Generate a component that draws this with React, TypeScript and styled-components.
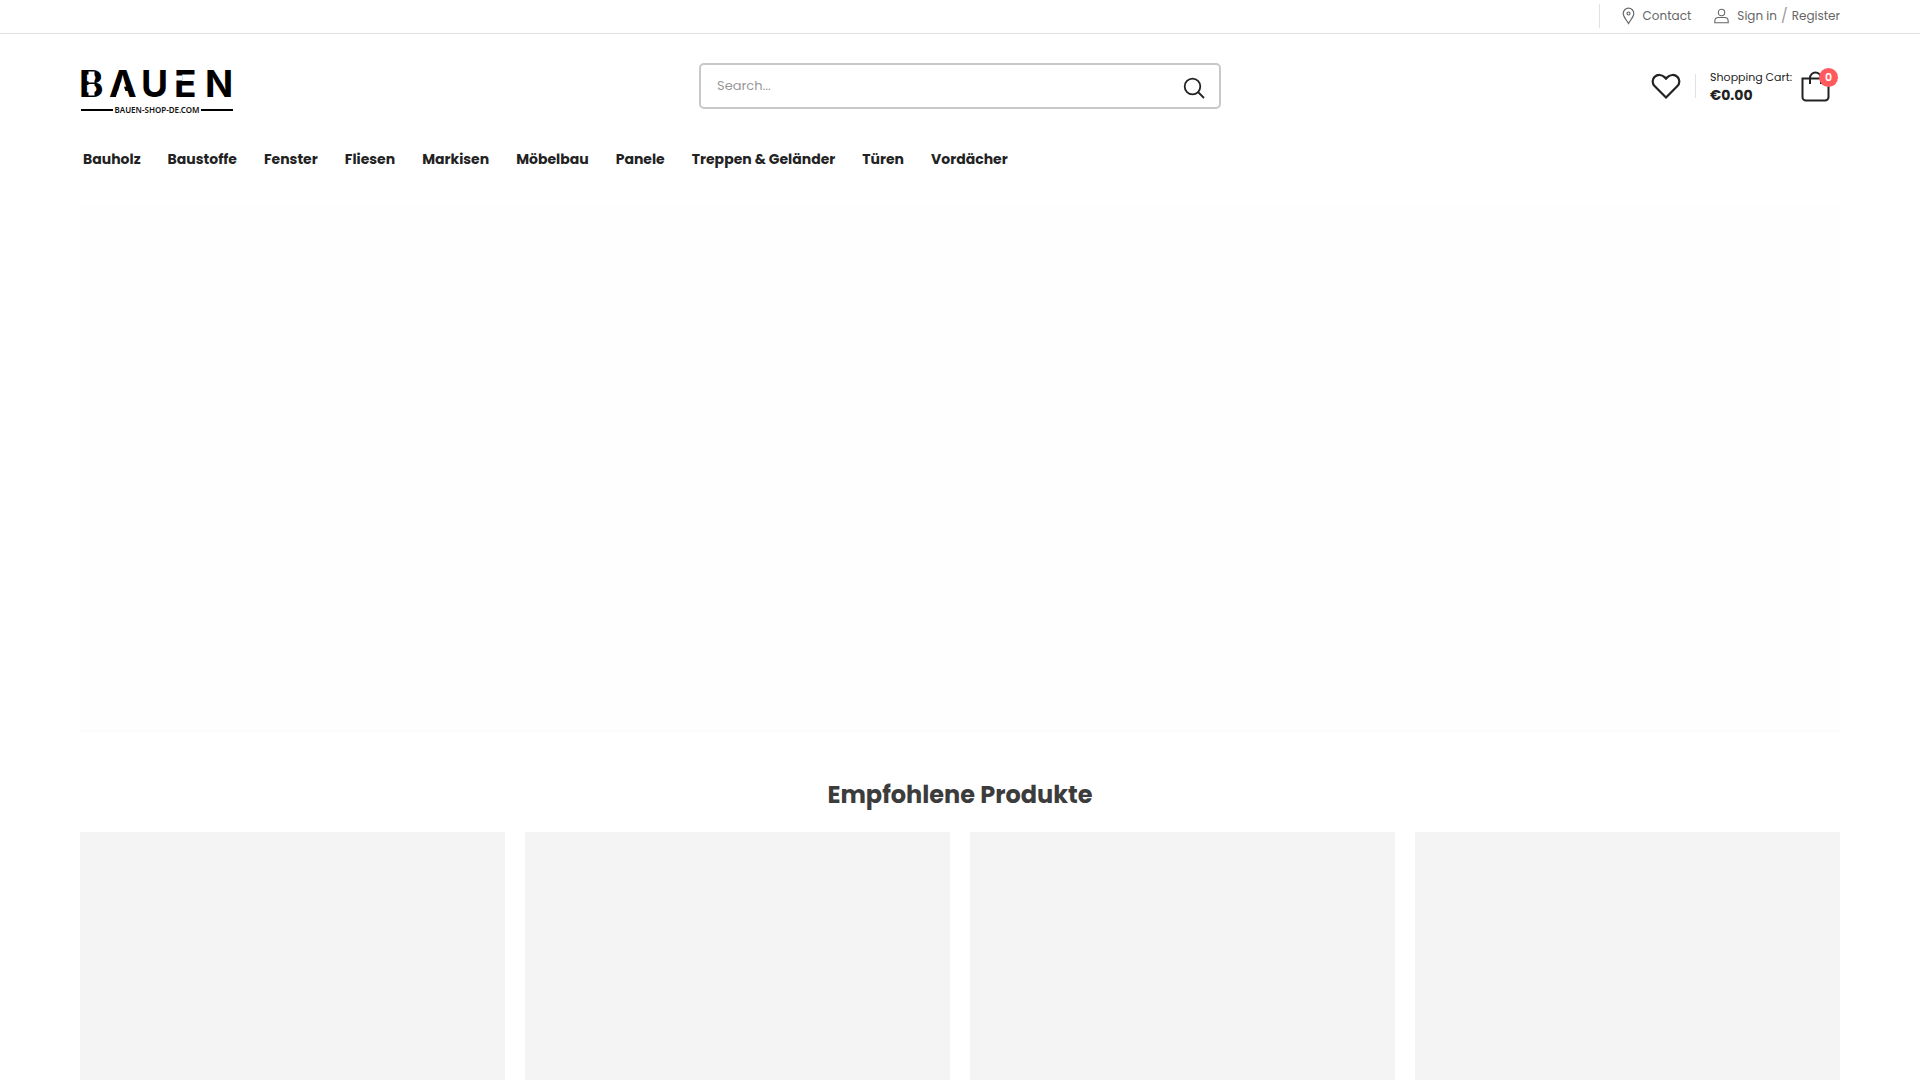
import React from "react";
import styled, { createGlobalStyle } from "styled-components";

const GlobalStyle = createGlobalStyle`
  *, *::before, *::after { box-sizing: border-box; }
  body {
    margin: 0;
    background: #fff;
    color: #222;
    font-family: Poppins, Inter, "Liberation Sans", sans-serif;
    font-size: 14px;
  }
  a { color: inherit; text-decoration: none; }
`;

const Page = styled.div`
  height: 100vh;
  overflow: hidden;
`;

const Container = styled.div`
  padding: 0 80px;
`;

const TopBar = styled.div`
  border-bottom: 1px solid #e1e1e1;
  color: #666;
  font-size: 12px;
  line-height: 16px;
`;

const TopBarInner = styled(Container)`
  display: flex;
  justify-content: flex-end;
  align-items: center;
  height: 33px;
  padding-bottom: 2px;
`;

const Divider = styled.span<{ $gap: number }>`
  width: 1px;
  height: 24px;
  margin-right: ${(p) => p.$gap}px;
  background: #e1e1e1;
`;

const TopLink = styled.a`
  display: flex;
  align-items: center;
  gap: 8px;
`;

const Account = styled.div`
  display: flex;
  align-items: center;
  gap: 4px;
  margin-left: 23px;
`;

const Slash = styled.span`
  color: #999;
  font-size: 14px;
`;

const MainRow = styled(Container)`
  display: grid;
  grid-template-columns: 1fr minmax(0, 522px) 1fr;
  align-items: center;
  padding-top: 24px;
`;

const LogoLink = styled.a`
  display: block;
  width: 160px;
  height: 56px;
`;

const SearchForm = styled.form`
  display: flex;
  height: 46px;
  border: 2px solid #c8c8c8;
  border-radius: 5px;
`;

const SearchInput = styled.input`
  flex: 1;
  min-width: 0;
  padding: 0 16px;
  border: 0;
  outline: 0;
  background: none;
  color: #666;
  font: inherit;
  font-size: 13px;
  &::placeholder { color: #999; opacity: 1; }
`;

const SearchButton = styled.button`
  display: flex;
  align-items: center;
  justify-content: center;
  width: 50px;
  padding: 4px 0 0;
  border: 0;
  background: none;
  color: #222;
`;

const Actions = styled.div`
  display: flex;
  justify-content: flex-end;
  align-items: center;
`;

const Wishlist = styled.a`
  display: flex;
  margin-right: 14px;
`;

const Cart = styled.a`
  display: flex;
  align-items: center;
  gap: 9px;
  padding-right: 10px;
`;

const CartText = styled.span`
  display: flex;
  flex-direction: column;
  font-size: 11px;
  line-height: 18px;
`;

const CartTotal = styled.strong`
  font-size: 14px;
  font-weight: 700;
`;

const BagBox = styled.span`
  position: relative;
  display: flex;
`;

const Badge = styled.span`
  position: absolute;
  top: -3px;
  right: -8px;
  width: 19px;
  height: 19px;
  border-radius: 50%;
  background: #ff5b5e;
  color: #fff;
  font-size: 11px;
  font-weight: 600;
  line-height: 19px;
  text-align: center;
`;

const Nav = styled.nav`
  padding: 35px 83px 0;
`;

const NavList = styled.ul`
  display: flex;
  gap: 27px;
  margin: 0;
  padding: 0;
  list-style: none;
  font-weight: 700;
  line-height: 20px;
`;

const Hero = styled.section`
  height: 528px;
  margin: 36px 80px 0;
  border-bottom: 3px solid #fcfcfc;
  background: #fefefe;
`;

const Title = styled.h2`
  margin: 45px 0 20px;
  color: #3c3c3c;
  font-size: 24px;
  font-weight: 700;
  line-height: 34px;
  text-align: center;
`;

const Products = styled(Container)`
  display: grid;
  grid-template-columns: repeat(4, 1fr);
  gap: 20px;
`;

const ProductCard = styled.article`
  aspect-ratio: 1;
  background: #f4f4f4;
`;

const Logo = () => (
  <svg width="160" height="56" viewBox="0 0 160 56" overflow="visible" aria-label="Bauen Shop">
    <g fontFamily="Inter, sans-serif" fontSize="37" fontWeight="700" fill="#000">
      <text x="-1 29 61 94 125" y="39">BAUEN</text>
    </g>
    <g fill="#fff">
      <path d="M8.500 13.500h6v11h-6ZM8.500 26h6v11.500h-6Z" />
      <path d="M35.800 39.500 40.800 24.500h1.800l5 15Z" />
      <path d="M95 17.500h7v5h-7Z" />
    </g>
    <path d="M1 52h32M121 52h32" stroke="#000" strokeWidth="2" />
    <text x="77" y="55" textAnchor="middle" fontFamily="Noto Sans, sans-serif" fontSize="8" fontWeight="600" fill="#111">
      BAUEN-SHOP-DE.COM
    </text>
  </svg>
);

const PinIcon = () => (
  <svg width="13" height="18" viewBox="0 0 13 18" fill="none" stroke="currentColor" strokeWidth="1.2">
    <path d="M6.500 16.500C5 13.500 1.200 9.800 1.200 6.500a5.300 5.300 0 0 1 10.600 0c0 3.300-3.800 7-5.300 10Z" />
    <circle cx="6.500" cy="6.500" r="1.500" />
  </svg>
);

const UserIcon = () => (
  <svg width="15" height="16" viewBox="0 0 15 16" fill="none" stroke="currentColor" strokeWidth="1.100">
    <circle cx="7.500" cy="4.500" r="3.200" />
    <path d="M.8 14.800v-1.500c0-2.400 1.700-3.800 3.700-3.800h6c2 0 3.700 1.400 3.700 3.800v1.500Z" />
  </svg>
);

const SearchIcon = () => (
  <svg width="22" height="22" viewBox="0 0 22 22" fill="none" stroke="currentColor" strokeWidth="1.800">
    <circle cx="9.500" cy="9.500" r="7.800" />
    <path d="m15 15 6 6" />
  </svg>
);

const HeartIcon = () => (
  <svg width="30" height="26" viewBox="0 0 30 26" fill="none" stroke="currentColor" strokeWidth="2.200">
    <path d="M15 24.500 3.800 13.300C1 10.500 1 6.300 3.600 3.900 6.500 1.200 10.800 1.400 13.500 4.100L15 5.600l1.500-1.500c2.700-2.700 7-2.900 9.900-.2 2.600 2.400 2.600 6.600-.2 9.400Z" />
  </svg>
);

const BagIcon = () => (
  <svg width="29" height="31" viewBox="0 0 29 31" fill="none" stroke="currentColor" strokeWidth="2">
    <path d="M1.500 7.500h26v18.500a3.500 3.500 0 0 1-3.500 3.500H5A3.500 3.500 0 0 1 1.500 26Z" />
    <path d="M9 13V7a5.500 5.500 0 0 1 11 0v6" />
  </svg>
);

const categories = [
  "Bauholz", "Baustoffe", "Fenster", "Fliesen", "Markisen",
  "Möbelbau", "Panele", "Treppen & Geländer", "Türen", "Vordächer",
];

export default function App() {
  return (
    <Page>
      <GlobalStyle />
      <header>
        <TopBar>
          <TopBarInner>
            <Divider $gap={22} />
            <TopLink href="#contact"><PinIcon />Contact</TopLink>
            <Account>
              <TopLink href="#login"><UserIcon />Sign in</TopLink>
              <Slash>/</Slash>
              <a href="#register">Register</a>
            </Account>
          </TopBarInner>
        </TopBar>
        <MainRow>
          <LogoLink href="#home"><Logo /></LogoLink>
          <SearchForm role="search">
            <SearchInput type="search" aria-label="Search" placeholder="Search..." />
            <SearchButton type="button" aria-label="Submit search"><SearchIcon /></SearchButton>
          </SearchForm>
          <Actions>
            <Wishlist href="#wishlist" aria-label="Wishlist"><HeartIcon /></Wishlist>
            <Divider $gap={14} />
            <Cart href="#cart">
              <CartText>
                <span>Shopping Cart:</span>
                <CartTotal>€0.00</CartTotal>
              </CartText>
              <BagBox><BagIcon /><Badge>0</Badge></BagBox>
            </Cart>
          </Actions>
        </MainRow>
        <Nav>
          <NavList>
            {categories.map((name) => (
              <li key={name}><a href="#category">{name}</a></li>
            ))}
          </NavList>
        </Nav>
      </header>
      <main>
        <Hero />
        <Title>Empfohlene Produkte</Title>
        <Products>
          {[1, 2, 3, 4].map((id) => <ProductCard key={id} />)}
        </Products>
      </main>
    </Page>
  );
}
